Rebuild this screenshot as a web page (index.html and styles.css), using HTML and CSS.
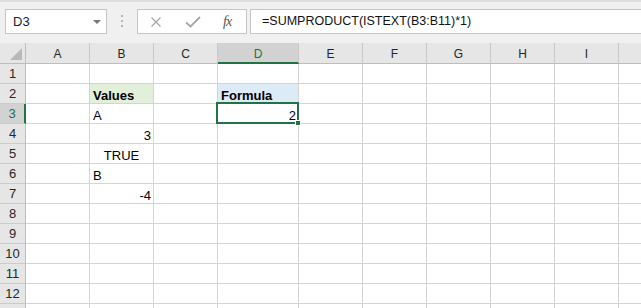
FILE: index.html
```html
<!DOCTYPE html>
<html lang="en">
<head>
    <meta charset="UTF-8">
    <title>SUMPRODUCT ISTEXT</title>
    <link rel="stylesheet" href="styles.css">
</head>
<body>

    <!-- formula bar -->
    <div class="formula-bar">
        <div class="name-box">
            <span>D3</span>
            <span class="drop"></span>
        </div>
        <div class="grip"><i></i><i></i><i></i></div>
        <div class="fx-buttons">
            <svg class="ico" width="12" height="12" viewBox="0 0 12 12"><path d="M1.5 1.5 L10.5 10.5 M10.5 1.5 L1.5 10.5" stroke="#a6a6a6" stroke-width="1.3" fill="none"/></svg>
            <svg class="ico" width="16" height="12" viewBox="0 0 16 12"><path d="M1 6.5 L5.5 10.5 L15 1" stroke="#a6a6a6" stroke-width="1.8" fill="none"/></svg>
            <span class="fx">fx</span>
        </div>
        <div class="formula-input">=SUMPRODUCT(ISTEXT(B3:B11)*1)</div>
    </div>

    <!-- sheet -->
    <div class="sheet">
        <div class="corner"><span class="tri"></span></div>
        <div class="ch">A</div><div class="ch">B</div><div class="ch">C</div><div class="ch ch-sel">D</div><div class="ch">E</div><div class="ch">F</div><div class="ch">G</div><div class="ch">H</div><div class="ch">I</div><div class="ch last"></div>

        <div class="rh">1</div><div class="c"></div><div class="c"></div><div class="c"></div><div class="c"></div><div class="c"></div><div class="c"></div><div class="c"></div><div class="c"></div><div class="c"></div><div class="c last"></div>

        <div class="rh">2</div><div class="c"></div><div class="c bold fill-green">Values</div><div class="c"></div><div class="c bold fill-blue">Formula</div><div class="c"></div><div class="c"></div><div class="c"></div><div class="c"></div><div class="c"></div><div class="c last"></div>

        <div class="rh rh-sel">3</div><div class="c"></div><div class="c">A</div><div class="c"></div><div class="c num active">2<span class="handle"></span></div><div class="c"></div><div class="c"></div><div class="c"></div><div class="c"></div><div class="c"></div><div class="c last"></div>

        <div class="rh">4</div><div class="c"></div><div class="c num">3</div><div class="c"></div><div class="c"></div><div class="c"></div><div class="c"></div><div class="c"></div><div class="c"></div><div class="c"></div><div class="c last"></div>

        <div class="rh">5</div><div class="c"></div><div class="c ctr">TRUE</div><div class="c"></div><div class="c"></div><div class="c"></div><div class="c"></div><div class="c"></div><div class="c"></div><div class="c"></div><div class="c last"></div>

        <div class="rh">6</div><div class="c"></div><div class="c">B</div><div class="c"></div><div class="c"></div><div class="c"></div><div class="c"></div><div class="c"></div><div class="c"></div><div class="c"></div><div class="c last"></div>

        <div class="rh">7</div><div class="c"></div><div class="c num">-4</div><div class="c"></div><div class="c"></div><div class="c"></div><div class="c"></div><div class="c"></div><div class="c"></div><div class="c"></div><div class="c last"></div>

        <div class="rh">8</div><div class="c"></div><div class="c"></div><div class="c"></div><div class="c"></div><div class="c"></div><div class="c"></div><div class="c"></div><div class="c"></div><div class="c"></div><div class="c last"></div>

        <div class="rh">9</div><div class="c"></div><div class="c"></div><div class="c"></div><div class="c"></div><div class="c"></div><div class="c"></div><div class="c"></div><div class="c"></div><div class="c"></div><div class="c last"></div>

        <div class="rh">10</div><div class="c"></div><div class="c"></div><div class="c"></div><div class="c"></div><div class="c"></div><div class="c"></div><div class="c"></div><div class="c"></div><div class="c"></div><div class="c last"></div>

        <div class="rh">11</div><div class="c"></div><div class="c"></div><div class="c"></div><div class="c"></div><div class="c"></div><div class="c"></div><div class="c"></div><div class="c"></div><div class="c"></div><div class="c last"></div>

        <div class="rh">12</div><div class="c"></div><div class="c"></div><div class="c"></div><div class="c"></div><div class="c"></div><div class="c"></div><div class="c"></div><div class="c"></div><div class="c"></div><div class="c last"></div>

        <!-- row 13, only its top edge is on screen -->
        <div class="rh"></div><div class="c"></div><div class="c"></div><div class="c"></div><div class="c"></div><div class="c"></div><div class="c"></div><div class="c"></div><div class="c"></div><div class="c"></div><div class="c last"></div>
    </div>

</body>
</html>
```

FILE: styles.css
```css
/* page */
body {
    margin: 0;
    width: 641px;
    height: 308px;
    overflow: hidden;
    background-color: #ffffff;
    font-family: 'Liberation Sans', Arial, sans-serif;
}

/* formula bar */
.formula-bar {
    display: flex;
    align-items: flex-start;
    height: 43px;
    box-sizing: border-box;
    padding-top: 7px;
    background-color: #f0f0f0;
    border-top: 2px solid #dedede;
}

.name-box {
    display: flex;
    align-items: center;
    justify-content: space-between;
    box-sizing: border-box;
    width: 102px;
    height: 25px;
    margin-left: 5px;
    padding: 0 5px 0 7px;
    background-color: #ffffff;
    border: 1px solid #c6c6c6;
    font-size: 13px;
    color: #222;
}

.drop {
    width: 0;
    height: 0;
    border-left: 4px solid transparent;
    border-right: 4px solid transparent;
    border-top: 4px solid #777;
}

.grip {
    display: flex;
    flex-direction: column;
    gap: 3px;
    width: 30px;
    padding: 6px 0 0 14px;
    box-sizing: border-box;
}

.grip i {
    display: block;
    width: 2px;
    height: 2px;
    background-color: #b4b4b4;
}

.fx-buttons {
    display: flex;
    align-items: center;
    box-sizing: border-box;
    width: 110px;
    height: 25px;
    padding-left: 12px;
    background-color: #ffffff;
    border: 1px solid #c6c6c6;
}

.fx-buttons .ico {
    margin-right: 23px;
}

.fx-buttons .ico + .ico {
    margin-right: 22px;
}

.fx {
    font-family: 'Liberation Serif', 'Times New Roman', serif;
    font-style: italic;
    font-size: 14px;
    color: #555;
    letter-spacing: -1px;
}

.formula-input {
    flex: 1;
    box-sizing: border-box;
    height: 25px;
    margin-left: 3px;
    padding: 4px 0 0 11px;
    background-color: #ffffff;
    border: 1px solid #c6c6c6;
    border-right: none;
    font-size: 12.5px;
    color: #111;
}

/* sheet grid */
.sheet {
    display: grid;
    grid-template-columns: 26px repeat(3, 64px) 81px repeat(5, 64px) 1fr;
    grid-template-rows: 21px;
    grid-auto-rows: 20px;
    font-size: 13px;
}

.corner,
.ch,
.rh {
    box-sizing: border-box;
    background-color: #e6e6e6;
    color: #262626;
    font-size: 12px;
}

.corner {
    position: relative;
    border-right: 1px solid #bdbdbd;
    border-bottom: 1px solid #bdbdbd;
}

.corner .tri {
    position: absolute;
    right: 3px;
    bottom: 3px;
    width: 0;
    height: 0;
    border-left: 12px solid transparent;
    border-bottom: 12px solid #b9b9b9;
}

.ch {
    display: flex;
    align-items: center;
    justify-content: center;
    padding-top: 1px;
    border-right: 1px solid #c9c9c9;
    border-bottom: 1px solid #bdbdbd;
}

.ch.last {
    border-right: none;
}

.ch-sel {
    background-color: #d2d2d2;
    color: #217346;
    border-bottom: 2px solid #217346;
    padding-top: 2px;
}

.rh {
    display: flex;
    align-items: center;
    justify-content: center;
    font-size: 13px;
    border-right: 1px solid #bdbdbd;
    border-bottom: 1px solid #cbcbcb;
}

.rh-sel {
    background-color: #d2d2d2;
    color: #217346;
    border-right: 2px solid #217346;
}

/* cells */
.c {
    position: relative;
    display: flex;
    align-items: flex-end;
    box-sizing: border-box;
    padding: 0 3px;
    line-height: 15px;
    border-right: 1px solid #d4d4d4;
    border-bottom: 1px solid #d4d4d4;
    color: #000;
    white-space: nowrap;
}

.c.last {
    border-right: none;
}

.num {
    justify-content: flex-end;
    padding-right: 2px;
}

.ctr {
    justify-content: center;
}

.bold {
    font-weight: bold;
}

.fill-green {
    background-color: #e2efda;
}

.fill-blue {
    background-color: #ddebf7;
}

/* active cell */
.active {
    z-index: 1;
}

.active::before {
    content: "";
    position: absolute;
    top: -2px;
    left: -2px;
    right: -1px;
    bottom: -1px;
    border: 2px solid #217346;
}

.handle {
    position: absolute;
    right: -3px;
    bottom: -3px;
    width: 6px;
    height: 6px;
    box-sizing: border-box;
    background-color: #217346;
    border: 1px solid #ffffff;
}
```
